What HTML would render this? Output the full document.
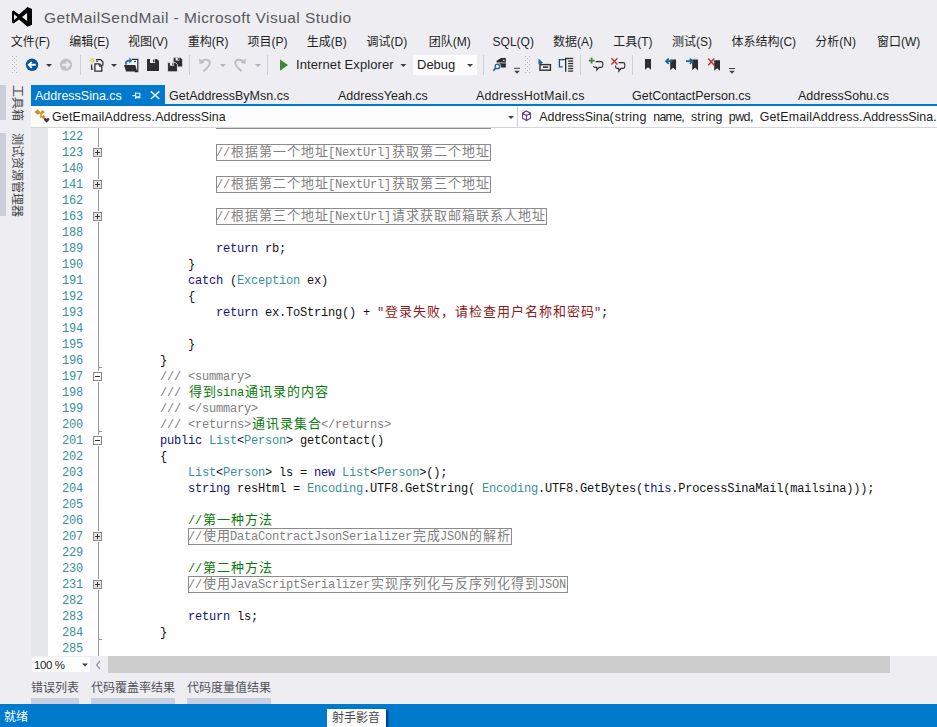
<!DOCTYPE html>
<html lang="zh-CN">
<head>
<meta charset="utf-8">
<title>GetMailSendMail - Microsoft Visual Studio</title>
<style>
*{box-sizing:border-box;margin:0;padding:0}
html,body{width:937px;height:727px;overflow:hidden}
body{position:relative;background:#eeeef2;font-family:"Liberation Sans","Noto Sans CJK SC",sans-serif;font-size:12px;color:#1e1e1e}
.t{position:absolute;white-space:nowrap;line-height:16px}
/* title */
#title{left:44px;top:8px;font-size:15.5px;letter-spacing:0.45px;line-height:20px;color:#58585c}
/* menu */
.m{top:34px;font-size:12px;line-height:16px;color:#1e1e1e}
/* toolbar */
/* tabs */
#tabline{position:absolute;left:31px;top:104px;width:906px;height:2px;background:#007acc}
#tabactive{position:absolute;left:31px;top:85px;width:134px;height:20px;background:#007acc}
.tab{top:88px;font-size:12.5px;line-height:17px;color:#1e1e1e}
.sv{font-size:12px;line-height:14px;color:#444;transform-origin:0 0;transform:rotate(90deg)}
.bt{top:680px;font-size:12px;line-height:16px;color:#505054}
/* nav */
#nav{position:absolute;left:31px;top:106px;width:906px;height:22px;background:#fdfdfd}
.nv{top:2px;font-size:12.4px;line-height:18px;color:#1e1e1e}
#nav{overflow:hidden;border-bottom:1px solid #d6d6da}
/* editor */
#ed{position:absolute;left:31px;top:128px;width:906px;height:528px;background:#fff;overflow:hidden}
#gut{position:absolute;left:0;top:0;width:17px;height:529px;background:#e6e7e8}
#oline{position:absolute;left:67px;top:0;width:1px;height:529px;background:#9a9a9a}
.tk{position:absolute;left:67px;width:4px;height:1px;background:#9a9a9a}
.ln{margin-top:1px;position:absolute;left:31px;width:21px;height:16px;line-height:16px;font-family:"Liberation Mono",monospace;font-size:12px;letter-spacing:-0.2px;color:#38909e;white-space:pre}
.cl{margin-top:1px;position:absolute;height:16px;line-height:16px;font-family:"Liberation Mono","Noto Sans CJK SC",monospace;font-size:12px;letter-spacing:-0.2px;color:#111;white-space:pre}
.cl b{font-weight:normal;font-family:"Noto Sans CJK SC","Liberation Sans",sans-serif;font-size:13px;letter-spacing:1px;line-height:0;margin-left:1px;margin-right:-1px}
.k{color:#12127c}.ty{color:#38909e}.s{color:#8f1a1a}.g{color:#808080}.c{color:#0a7a0a}
.bx{color:#808080}
.box{position:absolute;height:17px;border:1px solid #8c8c8c}
.pm{position:absolute;left:62px;width:9px;height:9px;border:1px solid #8a8a8a;background:#fff;box-shadow:0 0 0 1px #fff}
.pm:before{content:"";position:absolute;left:1px;top:3px;width:5px;height:1px;background:#333}
.pm.p{background:#e4e4e4}
.pm.p:after{content:"";position:absolute;left:3px;top:1px;width:1px;height:5px;background:#333}
</style>
</head>
<body>
<!-- TITLE -->
<svg style="position:absolute;left:11px;top:6px" width="22" height="22" viewBox="11 6 22 22"><path d="M27.5 7 L32 9.1 V24.7 L27.5 26.8 L19 19.4 L13.6 23.4 L12 22.5 V11.5 L13.6 10.6 L19 14.6 Z M27.1 13 V21 L22 17 Z M14 14.3 V19.9 L17.5 17.1 Z" fill="#000" fill-rule="evenodd"/></svg>
<div class="t" id="title">GetMailSendMail - Microsoft Visual Studio</div>
<!-- MENU -->
<div class="t m" style="left:10.8px">文件(F)</div>
<div class="t m" style="left:69.2px">编辑(E)</div>
<div class="t m" style="left:128px">视图(V)</div>
<div class="t m" style="left:187.8px">重构(R)</div>
<div class="t m" style="left:247.6px">项目(P)</div>
<div class="t m" style="left:306.7px">生成(B)</div>
<div class="t m" style="left:366.6px">调试(D)</div>
<div class="t m" style="left:428.8px">团队(M)</div>
<div class="t m" style="left:492.6px">SQL(Q)</div>
<div class="t m" style="left:553px">数据(A)</div>
<div class="t m" style="left:613.3px">工具(T)</div>
<div class="t m" style="left:672px">测试(S)</div>
<div class="t m" style="left:731.4px">体系结构(C)</div>
<div class="t m" style="left:815.3px">分析(N)</div>
<div class="t m" style="left:877px">窗口(W)</div>
<!-- TOOLBAR -->
<svg id="tbsvg" style="position:absolute;left:0;top:50px" width="937" height="30" viewBox="0 50 937 30">
<!-- grippers -->
<g fill="#b9b9c2">
<rect x="12" y="56" width="1" height="1"/><rect x="16" y="56" width="1" height="1"/><rect x="14" y="58" width="1" height="1"/><rect x="12" y="60" width="1" height="1"/><rect x="16" y="60" width="1" height="1"/><rect x="14" y="62" width="1" height="1"/><rect x="12" y="64" width="1" height="1"/><rect x="16" y="64" width="1" height="1"/><rect x="14" y="66" width="1" height="1"/><rect x="12" y="68" width="1" height="1"/><rect x="16" y="68" width="1" height="1"/><rect x="14" y="70" width="1" height="1"/><rect x="12" y="72" width="1" height="1"/><rect x="16" y="72" width="1" height="1"/>
<rect x="525" y="56" width="1" height="1"/><rect x="529" y="56" width="1" height="1"/><rect x="527" y="58" width="1" height="1"/><rect x="525" y="60" width="1" height="1"/><rect x="529" y="60" width="1" height="1"/><rect x="527" y="62" width="1" height="1"/><rect x="525" y="64" width="1" height="1"/><rect x="529" y="64" width="1" height="1"/><rect x="527" y="66" width="1" height="1"/><rect x="525" y="68" width="1" height="1"/><rect x="529" y="68" width="1" height="1"/><rect x="527" y="70" width="1" height="1"/><rect x="525" y="72" width="1" height="1"/><rect x="529" y="72" width="1" height="1"/>
</g>
<!-- separators -->
<g fill="#cccedb"><rect x="80" y="55" width="1" height="20"/><rect x="189" y="55" width="1" height="20"/><rect x="267" y="55" width="1" height="20"/><rect x="483" y="55" width="1" height="20"/><rect x="580" y="55" width="1" height="20"/><rect x="632" y="55" width="1" height="20"/></g>
<!-- back / forward -->
<circle cx="32" cy="64.8" r="6.2" fill="#00539c"/>
<path d="M35.8 64.8 H29.2 M31.8 61.8 L28.8 64.8 L31.8 67.8" stroke="#fff" stroke-width="1.9" fill="none"/>
<path d="M46 64 h6 l-3 2.9z" fill="#3a3a3e"/>
<circle cx="66" cy="64.8" r="6.2" fill="#c2c2c6"/>
<path d="M62.2 64.8 H68.8 M66.2 61.8 L69.2 64.8 L66.2 67.8" stroke="#eeeef2" stroke-width="1.9" fill="none"/>
<!-- new item -->
<g fill="none" stroke="#2d2d30" stroke-width="1.3">
<path d="M96 59.6 h4.6 l2.2 2.2 v4"/>
<path d="M93.2 69.2 h-1.6 v-4.8"/>
<path d="M94.9 63.8 h4.6 l2.3 2.3 v5 h-6.9z" fill="#fbfbfc"/>
<path d="M99.3 63.8 v2.5 h2.5" stroke-width="1"/>
</g>
<rect x="96.2" y="60.8" width="1.8" height="1" fill="#2d2d30"/>
<path d="M92.2 57.8 v5.2 M89.6 60.4 h5.2 M90.4 58.6 l3.6 3.6 M94 58.6 l-3.6 3.6" stroke="#e3c84a" stroke-width="1"/>
<rect x="91.5" y="59.7" width="1.4" height="1.4" fill="#fdf9d8"/>
<path d="M111 64 h6 l-3 2.9z" fill="#3a3a3e"/>
<!-- open folder -->
<path d="M131.8 59.4 h6 v12.2 h-3" fill="#f6f6f8" stroke="#2d2d30" stroke-width="1.2"/>
<rect x="134" y="60.9" width="2" height="1" fill="#2d2d30"/>
<path d="M124 65.1 h11.3 l1.9 6.5 h-11.2z" fill="#2d2d30"/>
<path d="M126.3 64.6 c-1.2 -2.6 0.4 -4.2 3.8 -4" fill="none" stroke="#1c6fc0" stroke-width="1.8"/>
<path d="M129.2 57.6 l3.2 2.9 l-3.2 2.9z" fill="#1c6fc0"/>
<!-- save -->
<path d="M147 59 h10 l2 2 v10 h-12z" fill="#2d2d30"/>
<rect x="150" y="59" width="5" height="4" fill="#eeeef2"/><rect x="153" y="59.6" width="1.4" height="2.6" fill="#2d2d30"/>
<!-- save all -->
<path d="M173.6 57.8 h7 l1.6 1.6 v7 h-8.6z" fill="#2d2d30"/>
<rect x="175.6" y="57.8" width="3.8" height="2.8" fill="#eeeef2"/><rect x="177.8" y="58.2" width="1.1" height="1.9" fill="#2d2d30"/>
<path d="M167.6 62.6 h8 l1.8 1.8 v7.4 h-9.8z" fill="#2d2d30" stroke="#eeeef2" stroke-width="0.8"/>
<rect x="170" y="62.8" width="4" height="3" fill="#eeeef2"/><rect x="172.3" y="63.2" width="1.1" height="2" fill="#2d2d30"/>
<!-- undo -->
<g fill="none" stroke="#bdbdc2" stroke-width="1.9">
<path d="M201 62.5 c3 -4.5 9 -3 8.8 0.8 c-0.2 3 -3.5 5 -6.3 8"/>
<path d="M244 62.5 c-3 -4.5 -9 -3 -8.8 0.8 c0.2 3 3.5 5 6.3 8"/>
</g>
<path d="M199.2 58.6 l0.3 5.4 l5 -1.2z" fill="#bdbdc2"/>
<path d="M245.8 58.6 l-0.3 5.4 l-5 -1.2z" fill="#bdbdc2"/>
<path d="M220 64 h6 l-3 3z M255 64 h6 l-3 3z" fill="#b4b4b8"/>
<!-- play -->
<path d="M280 59.4 l8 5.7 l-8 5.7z" fill="#388a34"/>
<path d="M400.3 64 h6 l-3 3z" fill="#3f3f43"/>
<rect x="413" y="55" width="64" height="20" fill="#fdfdfd"/>
<path d="M467 64 h6 l-3 3z" fill="#3f3f43"/>
<!-- find in files -->
<path d="M496.6 62.4 V60.7 L501 58.1 H505.9 V62.4z M498 63.3 H505.9 V67.4 H498z" fill="#2d2d30"/>
<rect x="502.8" y="59.8" width="1.9" height="1" fill="#eeeef2"/>
<circle cx="497.4" cy="66.4" r="3.5" fill="#eeeef2"/>
<circle cx="497.4" cy="66.4" r="2.2" fill="#e8f1fa" stroke="#1c5fa0" stroke-width="1.3"/>
<path d="M495.7 68.2 l-2.5 2.4" stroke="#1c5fa0" stroke-width="1.7"/>
<!-- overflow 1 -->
<rect x="514" y="67.8" width="6" height="1" fill="#3f3f43"/><path d="M514.2 70.8 h5.6 l-2.8 3z" fill="#3f3f43"/>
<!-- pointer + rect -->
<path d="M538.5 58.6 L538.5 64.6 L540 63.4 L540.8 65 L542.2 64.4 L541.4 62.9 L543.2 62.9 Z" fill="#1c5fa0"/>
<rect x="540" y="64.6" width="10.4" height="5.6" fill="#f4f4f6" stroke="#2d2d30" stroke-width="1.4"/>
<rect x="543" y="66.4" width="5.2" height="1.5" fill="#2d2d30"/>
<!-- list w bracket -->
<path d="M565 59.6 h-5.6 v7.2 h3.2" fill="none" stroke="#1f4e8c" stroke-width="1.3"/>
<rect x="565" y="57.8" width="1.3" height="14" fill="#2d2d30"/>
<g fill="#2d2d30"><rect x="566" y="57.8" width="7.2" height="1.3"/><rect x="568.2" y="60.4" width="5" height="1.3"/><rect x="568.2" y="62.9" width="5" height="1.3"/><rect x="568.2" y="65.4" width="5" height="1.3"/><rect x="568.2" y="67.9" width="5" height="1.3"/><rect x="568.2" y="70.4" width="5" height="1.3"/></g>
<!-- comment -->
<path d="M591.6 57.6 v6 M588.8 60.6 h5.8" stroke="#388a34" stroke-width="1.8"/>
<path d="M595.6 61.6 h5.6 q1.6 0 1.6 1.6 v2.6 q0 1.6 -1.6 1.6 h-2 l-2.4 2.6 v-2.6 h-1.6 q-1.4 0 -1.6 -1.4" fill="none" stroke="#2d2d30" stroke-width="1.1"/>
<!-- uncomment -->
<path d="M611.4 58.2 l6 6.4 M617.4 58.2 l-6 6.4" stroke="#c0392b" stroke-width="1.5"/>
<path d="M618.6 62.6 h4.6 q1.6 0 1.6 1.6 v2.6 q0 1.6 -1.6 1.6 h-2 l-2.4 2.8 v-2.8 h-1.6 q-1.6 0 -1.6 -1.6 v-1.4" fill="none" stroke="#2d2d30" stroke-width="1.1"/>
<!-- bookmarks -->
<path d="M645 59 h6 v10.8 l-3 -2.6 l-3 2.6z" fill="#2d2d30"/>
<path d="M670.2 59.6 h5.8 v10.6 l-2.9 -2.5 l-2.9 2.5z" fill="#2d2d30"/>
<path d="M672.6 61.2 h-6 M668.8 58.6 l-2.8 2.6 l2.8 2.6" fill="none" stroke="#1c5fa8" stroke-width="1.7"/>
<path d="M692.2 59.6 h5.8 v10.6 l-2.9 -2.5 l-2.9 2.5z" fill="#2d2d30"/>
<path d="M686 61.2 h6 M689.8 58.6 l2.8 2.6 l-2.8 2.6" fill="none" stroke="#1c5fa8" stroke-width="1.7"/>
<path d="M714.2 60.2 h5.8 v10.6 l-2.9 -2.5 l-2.9 2.5z" fill="#2d2d30"/>
<path d="M708.2 58.6 l6 6.6 M714.2 58.6 l-6 6.6" stroke="#c0392b" stroke-width="1.5"/>
<!-- overflow 2 -->
<rect x="729" y="68" width="6" height="1" fill="#3f3f43"/><path d="M729.2 70.8 h5.6 l-2.8 3z" fill="#3f3f43"/>
</svg>
<div class="t" style="left:296px;top:57px;font-size:13px;letter-spacing:0.1px">Internet Explorer</div>
<div class="t" style="left:417px;top:57px;font-size:13px">Debug</div>
<!-- SIDEBAR -->
<div style="position:absolute;left:0;top:85px;width:6px;height:35px;background:#cccedb"></div>
<div style="position:absolute;left:0;top:133px;width:6px;height:83px;background:#cccedb"></div>
<div class="t sv" style="left:24px;top:85px">工具箱</div>
<div class="t sv" style="left:24px;top:133px">测试资源管理器</div>
<!-- TABS -->
<div id="tabactive"></div>
<div id="tabline"></div>
<svg style="position:absolute;left:130px;top:88px" width="32" height="14" viewBox="130 88 32 14"><g fill="none" stroke="#d8ebf8" stroke-width="1.1"><path d="M132.2 95.6 H135.5 M135.6 92.3 V99"/><path d="M135.6 93.3 H139.9 V97.6 H135.6" /><path d="M135.6 97 H139.9" stroke-width="1.6"/></g><path d="M150.8 91.4 L159.4 99 M159.4 91.4 L150.8 99" stroke="#e4f1fa" stroke-width="1.5" fill="none"/></svg>
<div class="t tab" style="left:35px;color:#fff">AddressSina.cs</div>
<div class="t tab" style="left:169px">GetAddressByMsn.cs</div>
<div class="t tab" style="left:338px">AddressYeah.cs</div>
<div class="t tab" style="left:476px;letter-spacing:0.27px">AddressHotMail.cs</div>
<div class="t tab" style="left:632px">GetContactPerson.cs</div>
<div class="t tab" style="left:798px">AddressSohu.cs</div>
<!-- NAV -->
<div id="nav">
<svg style="position:absolute;left:0;top:0" width="906" height="21" viewBox="31 106 906 21">
<rect x="517" y="106" width="1" height="21" fill="#cccedb"/>
<path d="M508 116 h6 l-3 3z" fill="#3f3f43"/>
<g fill="none" stroke="#d48a1c" stroke-width="1.5"><path d="M37.5 113 h3.5 v4 h3"/></g>
<path d="M37.5 109.2 l2.8 2.8 l-2.8 2.8 l-2.8 -2.8z M42.6 110 l2 2 l-2 2 l-2 -2z M43.6 115 l2 2 l-2 2 l-2 -2z" fill="#d48a1c"/>
<path d="M46.6 122.8 l-2.6 -2.8 q-0.6 -1.6 0.9 -1.9 q1 -0.1 1.7 0.9 q0.7 -1 1.7 -0.9 q1.5 0.3 0.9 1.9z" fill="#333"/>
<path d="M526.5 111 l4 2.2 v5 l-4 2.3 l-4 -2.3 v-5z M522.5 113.2 l4 2.3 l4 -2.3 M526.5 115.5 v5" fill="none" stroke="#5c3d99" stroke-width="1.1"/>
</svg>
<div class="t nv" style="left:21.0px;letter-spacing:0.20px">GetEmailAddress.</div>
<div class="t nv" style="left:124.3px;letter-spacing:0.00px">AddressSina</div>
<div class="t nv" style="left:508.3px;letter-spacing:0.00px">AddressSina(</div>
<div class="t nv" style="left:583.8px;letter-spacing:0.25px">string</div>
<div class="t nv" style="left:622.3px;letter-spacing:-0.75px">name,</div>
<div class="t nv" style="left:659.9px;letter-spacing:0.25px">string</div>
<div class="t nv" style="left:697.8px;letter-spacing:-0.55px">pwd,</div>
<div class="t nv" style="left:728.7px;letter-spacing:0.20px">GetEmailAddress.</div>
<div class="t nv" style="left:831.9px;letter-spacing:0.00px">AddressSina.</div>
</div>
<!-- EDITOR -->
<div id="ed"><div id="gut"></div><div id="oline"></div>
<div style="position:absolute;left:185px;top:0;width:275px;height:1px;background:#8c8c8c"></div>
<div class="ln" style="top:0px">122</div>
<div class="ln" style="top:16px">123</div>
<div class="pm p" style="top:20px"></div>
<div class="cl" style="left:185px;top:16px"><span class="bx">//<b>根据第一个地址</b>[NextUrl]<b>获取第二个地址</b></span></div>
<div class="box" style="left:185px;top:16px;width:275px"></div>
<div class="ln" style="top:32px">140</div>
<div class="ln" style="top:48px">141</div>
<div class="pm p" style="top:52px"></div>
<div class="cl" style="left:185px;top:48px"><span class="bx">//<b>根据第二个地址</b>[NextUrl]<b>获取第三个地址</b></span></div>
<div class="box" style="left:185px;top:48px;width:275px"></div>
<div class="ln" style="top:64px">162</div>
<div class="ln" style="top:80px">163</div>
<div class="pm p" style="top:84px"></div>
<div class="cl" style="left:185px;top:80px"><span class="bx">//<b>根据第三个地址</b>[NextUrl]<b>请求获取邮箱联系人地址</b></span></div>
<div class="box" style="left:185px;top:80px;width:331px"></div>
<div class="ln" style="top:96px">188</div>
<div class="ln" style="top:112px">189</div>
<div class="cl" style="left:185px;top:112px"><span class="k">return</span> rb;</div>
<div class="ln" style="top:128px">190</div>
<div class="cl" style="left:157px;top:128px">}</div>
<div class="ln" style="top:144px">191</div>
<div class="cl" style="left:157px;top:144px"><span class="k">catch</span> (<span class="ty">Exception</span> ex)</div>
<div class="ln" style="top:160px">192</div>
<div class="cl" style="left:157px;top:160px">{</div>
<div class="ln" style="top:176px">193</div>
<div class="cl" style="left:185px;top:176px"><span class="k">return</span> ex.ToString() + <span class="s">"<b>登录失败，请检查用户名称和密码</b>"</span>;</div>
<div class="ln" style="top:192px">194</div>
<div class="ln" style="top:208px">195</div>
<div class="cl" style="left:157px;top:208px">}</div>
<div class="ln" style="top:224px">196</div>
<div class="cl" style="left:129px;top:224px">}</div>
<div class="ln" style="top:240px">197</div>
<div class="pm m" style="top:244px"></div>
<div class="cl" style="left:129px;top:240px"><span class="g">/// &lt;summary&gt;</span></div>
<div class="ln" style="top:256px">198</div>
<div class="cl" style="left:129px;top:256px"><span class="g">/// </span><span class="c"><b>得到</b>sina<b>通讯录的内容</b></span></div>
<div class="ln" style="top:272px">199</div>
<div class="cl" style="left:129px;top:272px"><span class="g">/// &lt;/summary&gt;</span></div>
<div class="ln" style="top:288px">200</div>
<div class="cl" style="left:129px;top:288px"><span class="g">/// &lt;returns&gt;</span><span class="c"><b>通讯录集合</b></span><span class="g">&lt;/returns&gt;</span></div>
<div class="ln" style="top:304px">201</div>
<div class="pm m" style="top:308px"></div>
<div class="cl" style="left:129px;top:304px"><span class="k">public</span> <span class="ty">List</span>&lt;<span class="ty">Person</span>&gt; getContact()</div>
<div class="ln" style="top:320px">202</div>
<div class="cl" style="left:129px;top:320px">{</div>
<div class="ln" style="top:336px">203</div>
<div class="cl" style="left:157px;top:336px"><span class="ty">List</span>&lt;<span class="ty">Person</span>&gt; ls = <span class="k">new</span> <span class="ty">List</span>&lt;<span class="ty">Person</span>&gt;();</div>
<div class="ln" style="top:352px">204</div>
<div class="cl" style="left:157px;top:352px"><span class="k">string</span> resHtml = <span class="ty">Encoding</span>.UTF8.GetString( <span class="ty">Encoding</span>.UTF8.GetBytes(<span class="k">this</span>.ProcessSinaMail(mailsina)));</div>
<div class="ln" style="top:368px">205</div>
<div class="ln" style="top:384px">206</div>
<div class="cl" style="left:157px;top:384px"><span class="c">//<b>第一种方法</b></span></div>
<div class="ln" style="top:400px">207</div>
<div class="pm p" style="top:404px"></div>
<div class="cl" style="left:157px;top:400px"><span class="bx">//<b>使用</b>DataContractJsonSerializer<b>完成</b>JSON<b>的解析</b></span></div>
<div class="box" style="left:157px;top:400px;width:324px"></div>
<div class="ln" style="top:416px">229</div>
<div class="ln" style="top:432px">230</div>
<div class="cl" style="left:157px;top:432px"><span class="c">//<b>第二种方法</b></span></div>
<div class="ln" style="top:448px">231</div>
<div class="pm p" style="top:452px"></div>
<div class="cl" style="left:157px;top:448px"><span class="bx">//<b>使用</b>JavaScriptSerializer<b>实现序列化与反序列化得到</b>JSON</span></div>
<div class="box" style="left:157px;top:448px;width:380px"></div>
<div class="ln" style="top:464px">282</div>
<div class="ln" style="top:480px">283</div>
<div class="cl" style="left:157px;top:480px"><span class="k">return</span> ls;</div>
<div class="ln" style="top:496px">284</div>
<div class="cl" style="left:129px;top:496px">}</div>
<div class="ln" style="top:512px">285</div>
<div class="tk" style="top:239px"></div>
<div class="tk" style="top:303px"></div>
<div class="tk" style="top:511px"></div>
</div>
<!-- BOTTOM -->
<div id="bot">
<div style="position:absolute;left:32px;top:657px;width:58px;height:15px;background:#fdfdfd"></div>
<div class="t" style="left:34px;top:657px;font-size:11.5px;letter-spacing:-0.4px;line-height:16px;color:#1e1e1e">100 %</div>
<svg style="position:absolute;left:80px;top:656px" width="30" height="18" viewBox="80 656 30 18"><path d="M82 663.5 h6 l-3 3z" fill="#3f3f43"/><path d="M100 661 l-3.4 4 l3.4 4" fill="none" stroke="#9b9ba0" stroke-width="1.3"/></svg>
<div style="position:absolute;left:108px;top:656px;width:782px;height:17px;background:#cdcdcd"></div>
<div class="t bt" style="left:31px">错误列表</div>
<div class="t bt" style="left:91px">代码覆盖率结果</div>
<div class="t bt" style="left:187px">代码度量值结果</div>
<div style="position:absolute;left:31px;top:698px;width:48px;height:6px;background:#cccedb"></div>
<div style="position:absolute;left:91px;top:698px;width:84px;height:6px;background:#cccedb"></div>
<div style="position:absolute;left:187px;top:698px;width:84px;height:6px;background:#cccedb"></div>
<div style="position:absolute;left:0;top:704px;width:937px;height:23px;background:#007acc"></div>
<div class="t" style="left:4px;top:709px;font-size:12px;line-height:16px;color:#fff">就绪</div>
<div style="position:absolute;left:327px;top:709px;width:59px;height:20px;background:#fbfbfb;box-shadow:2px 1px 2px rgba(0,20,70,0.65)"></div>
<div class="t" style="left:332px;top:710px;font-size:12px;line-height:16px;color:#4a4a4a">射手影音</div>
</div>
</body>
</html>
